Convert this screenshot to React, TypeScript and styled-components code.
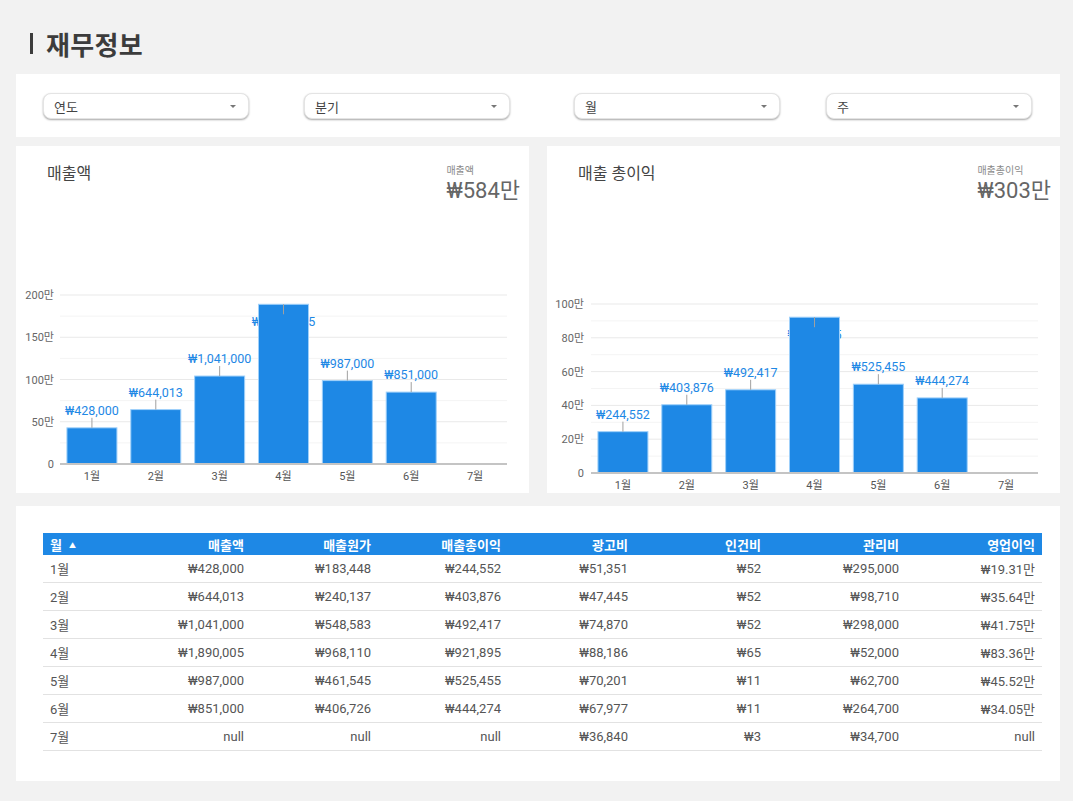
import React from "react";
import styled, { createGlobalStyle } from "styled-components";

const GlobalStyle = createGlobalStyle`
  html, body {
    margin: 0;
    padding: 0;
    background: #f2f2f2;
    font-family: Roboto, "Noto Sans CJK KR", "Noto Sans", sans-serif;
  }
`;

const Page = styled.div`
  width: 1073px;
  height: 801px;
  box-sizing: border-box;
  padding: 0 13px 0 16px;
  display: flex;
  flex-direction: column;
  background: #f2f2f2;
`;

const PageTitle = styled.h1`
  margin: 0;
  height: 74px;
  display: flex;
  align-items: center;
  gap: 13px;
  padding: 16px 0 4px 14px;
  box-sizing: border-box;
  font-size: 26px;
  font-weight: 700;
  color: #3c3c3c;
  letter-spacing: 0.3px;
`;

const TitleBar = styled.span`
  display: inline-block;
  width: 3px;
  height: 21px;
  background: #3c3c3c;
`;

const Panel = styled.div`
  background: #ffffff;
`;

const FilterBar = styled(Panel)`
  height: 63px;
  box-sizing: border-box;
  padding: 19px 0 0 27px;
  display: grid;
  grid-template-columns: 261px 270px 252px 206px;
  align-items: start;
`;

const Dropdown = styled.div`
  width: 206px;
  height: 26px;
  box-sizing: border-box;
  border-radius: 8px;
  background: #fff;
  border: 1px solid #e4e4e4;
  box-shadow: 0 1px 2px rgba(0, 0, 0, 0.35);
  display: flex;
  align-items: center;
  justify-content: space-between;
  padding: 0 12px 0 10px;
  font-size: 13px;
  color: #444;
`;

const Caret = styled.span`
  width: 0;
  height: 0;
  border-left: 3px solid transparent;
  border-right: 3px solid transparent;
  border-top: 3px solid #777;
`;

const ChartRow = styled.div`
  margin-top: 9px;
  display: grid;
  grid-template-columns: 513px 513px;
  column-gap: 18px;
`;

const ChartPanel = styled(Panel)`
  height: 347px;
  display: flex;
  flex-direction: column;
`;

const ChartHeader = styled.div`
  display: flex;
  justify-content: space-between;
  align-items: flex-start;
  padding: 18px 9px 0 31px;
`;

const ChartTitle = styled.div`
  font-size: 16px;
  line-height: 20px;
  color: #444;
`;

const Kpi = styled.div`
  display: flex;
  flex-direction: column;
`;

const KpiLabel = styled.div`
  font-size: 10px;
  line-height: 14px;
  color: #8a8a8a;
`;

const KpiValue = styled.div`
  font-size: 22px;
  line-height: 26px;
  color: #666;
`;

const ChartSvg = styled.svg`
  display: block;
  margin-top: auto;
  font-family: Roboto, "Noto Sans CJK KR", sans-serif;
`;

const TablePanel = styled(Panel)`
  margin-top: 13px;
  height: 275px;
  box-sizing: border-box;
  padding: 27px 0 0 27px;
`;

const Table = styled.table`
  width: 999px;
  border-collapse: collapse;
  table-layout: fixed;
  font-size: 13px;
  color: #555;
`;

const HeadCell = styled.th<{ $left?: boolean }>`
  height: 22px;
  padding: 0 7px;
  background: #1e88e5;
  color: #fff;
  font-weight: 700;
  text-align: ${(p) => (p.$left ? "left" : "right")};
`;

const Cell = styled.td<{ $left?: boolean }>`
  height: 27px;
  padding: 0 7px;
  border-bottom: 1px solid #e2e2e2;
  text-align: ${(p) => (p.$left ? "left" : "right")};
  white-space: nowrap;
`;

const SortArrow = styled.span`
  display: inline-block;
  margin-left: 7px;
  font-size: 7px;
  vertical-align: 2px;
`;

type ChartProps = {
  values: (number | null)[];
  max: number;
  ticks: string[];
  baseY: number;
  topY: number;
  labelX: number;
};

const fmt = (v: number) => "₩" + v.toLocaleString("en-US");

const BarChart = ({ values, max, ticks, baseY, topY, labelX }: ChartProps) => {
  const left = 44;
  const right = 491;
  const step = (right - left) / values.length;
  const plotH = baseY - topY;
  const lines: number[] = [];
  for (let i = 0; i < ticks.length * 2 - 1; i++) lines.push(i);
  const months = ["1월", "2월", "3월", "4월", "5월", "6월", "7월"];
  return (
    <ChartSvg width={513} height={230} viewBox="0 0 513 230">
      {lines.map((i) => {
        const y = topY + (plotH / ((ticks.length - 1) * 2)) * i;
        return (
          <line
            key={i}
            x1={left}
            x2={right}
            y1={y}
            y2={y}
            stroke={i % 2 === 0 ? "#e9e9e9" : "#f4f4f4"}
            strokeWidth={1}
          />
        );
      })}
      {ticks.map((t, i) => (
        <text
          key={t}
          x={labelX}
          y={topY + (plotH / (ticks.length - 1)) * i + 4}
          textAnchor="end"
          fontSize={11}
          fill="#666"
        >
          {t}
        </text>
      ))}
      {values.map((v, i) => {
        const cx = left + step * (i + 0.5);
        if (v === null) return null;
        const h = (v / max) * plotH;
        const top = baseY - h;
        const flip = top - 25 < topY;
        const labelY = flip ? top + 22 : top - 13;
        return (
          <g key={i}>
            <text x={cx} y={labelY} textAnchor="middle" fontSize={12.5} fill="#1e88e5">
              {fmt(v)}
            </text>
            <rect x={cx - 25} y={top} width={50} height={h} fill="#1e88e5" stroke="#9fd0fa" strokeWidth={1} />
            <line
              x1={cx}
              x2={cx}
              y1={flip ? top : top - 10}
              y2={flip ? top + 10 : top}
              stroke="#a0a0a0"
              strokeWidth={1}
            />
          </g>
        );
      })}
      <line x1={left} x2={right} y1={baseY} y2={baseY} stroke="#c4c4c4" strokeWidth={2} />
      {months.map((m, i) => (
        <text
          key={m}
          x={left + step * (i + 0.5)}
          y={baseY + 16}
          textAnchor="middle"
          fontSize={11}
          fill="#555"
        >
          {m}
        </text>
      ))}
    </ChartSvg>
  );
};

const rows = [
  ["1월", "₩428,000", "₩183,448", "₩244,552", "₩51,351", "₩52", "₩295,000", "₩19.31만"],
  ["2월", "₩644,013", "₩240,137", "₩403,876", "₩47,445", "₩52", "₩98,710", "₩35.64만"],
  ["3월", "₩1,041,000", "₩548,583", "₩492,417", "₩74,870", "₩52", "₩298,000", "₩41.75만"],
  ["4월", "₩1,890,005", "₩968,110", "₩921,895", "₩88,186", "₩65", "₩52,000", "₩83.36만"],
  ["5월", "₩987,000", "₩461,545", "₩525,455", "₩70,201", "₩11", "₩62,700", "₩45.52만"],
  ["6월", "₩851,000", "₩406,726", "₩444,274", "₩67,977", "₩11", "₩264,700", "₩34.05만"],
  ["7월", "null", "null", "null", "₩36,840", "₩3", "₩34,700", "null"],
];

const columns = [
  { name: "월", w: 80 },
  { name: "매출액", w: 128 },
  { name: "매출원가", w: 127 },
  { name: "매출총이익", w: 130 },
  { name: "광고비", w: 127 },
  { name: "인건비", w: 133 },
  { name: "관리비", w: 138 },
  { name: "영업이익", w: 136 },
];

export default function App() {
  return (
    <Page>
      <GlobalStyle />
      <PageTitle>
        <TitleBar />
        재무정보
      </PageTitle>
      <FilterBar>
        {["연도", "분기", "월", "주"].map((f) => (
          <Dropdown key={f}>
            <span>{f}</span>
            <Caret />
          </Dropdown>
        ))}
      </FilterBar>
      <ChartRow>
        <ChartPanel>
          <ChartHeader>
            <ChartTitle>매출액</ChartTitle>
            <Kpi>
              <KpiLabel>매출액</KpiLabel>
              <KpiValue>₩584만</KpiValue>
            </Kpi>
          </ChartHeader>
          <BarChart
            values={[428000, 644013, 1041000, 1890005, 987000, 851000, null]}
            max={2000000}
            ticks={["200만", "150만", "100만", "50만", "0"]}
            topY={32}
            baseY={201}
            labelX={38}
          />
        </ChartPanel>
        <ChartPanel>
          <ChartHeader>
            <ChartTitle>매출 총이익</ChartTitle>
            <Kpi>
              <KpiLabel>매출총이익</KpiLabel>
              <KpiValue>₩303만</KpiValue>
            </Kpi>
          </ChartHeader>
          <BarChart
            values={[244552, 403876, 492417, 921895, 525455, 444274, null]}
            max={1000000}
            ticks={["100만", "80만", "60만", "40만", "20만", "0"]}
            topY={41}
            baseY={210}
            labelX={37}
          />
        </ChartPanel>
      </ChartRow>
      <TablePanel>
        <Table>
          <colgroup>
            {columns.map((c) => (
              <col key={c.name} style={{ width: c.w }} />
            ))}
          </colgroup>
          <thead>
            <tr>
              {columns.map((c, i) => (
                <HeadCell key={c.name} $left={i === 0}>
                  {c.name}
                  {i === 0 && <SortArrow>▲</SortArrow>}
                </HeadCell>
              ))}
            </tr>
          </thead>
          <tbody>
            {rows.map((r) => (
              <tr key={r[0]}>
                {r.map((v, i) => (
                  <Cell key={i} $left={i === 0}>
                    {v}
                  </Cell>
                ))}
              </tr>
            ))}
          </tbody>
        </Table>
      </TablePanel>
    </Page>
  );
}
